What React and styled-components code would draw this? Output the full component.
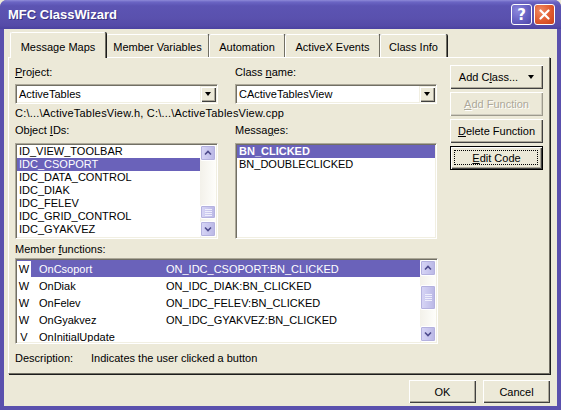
import React from 'react';
import styled, { createGlobalStyle } from 'styled-components';

const Global = createGlobalStyle`
  html, body { margin: 0; padding: 0; background: #ece9d8; }
  body { font-family: "Liberation Sans", Arial, sans-serif; font-size: 11px; color: #000; }
  * { box-sizing: border-box; }
`;

const Frame = styled.div`
  width: 561px;
  height: 410px;
  display: flex;
  flex-direction: column;
  background: #5a50ad;
  border-radius: 7px 7px 0 0;
  overflow: hidden;
`;

const TitleBar = styled.div`
  height: 29px;
  flex: none;
  display: flex;
  align-items: center;
  padding: 0 6px 0 8px;
  background: linear-gradient(180deg, #8e8ad8 0%, #6b65c4 7%, #5c54b3 20%, #5a51ae 60%, #554ba8 88%, #4b42a0 100%);
  color: #fff;
  font-weight: bold;
  font-size: 13px;
`;

const Title = styled.div`
  flex: 1;
  text-shadow: 1px 1px 0 #3a3280;
`;

const CapButtons = styled.div`
  display: flex;
  gap: 2px;
`;

const CapButton = styled.div`
  width: 21px;
  height: 21px;
  border: 1px solid #fff;
  border-radius: 3px;
  background: ${p => p.$close
    ? 'radial-gradient(circle at 30% 30%, #f08a64 0%, #e05a2e 55%, #c8401c 100%)'
    : 'radial-gradient(circle at 30% 30%, #8c88dc 0%, #6660c2 55%, #4d46a8 100%)'};
  display: flex;
  align-items: center;
  justify-content: center;
  color: #fff;
  font-size: 15px;
  font-weight: bold;
  font-family: "DejaVu Sans", sans-serif;
`;

const Client = styled.div`
  flex: 1;
  margin: 0 4px 4px;
  background: #ece9d8;
  display: flex;
  flex-direction: column;
  padding: 3px 7px 0 4px;
`;

const TabRow = styled.div`
  display: flex;
  align-items: flex-end;
  height: 26px;
  margin-left: 2px;
  margin-bottom: -1px;
  position: relative;
  z-index: 1;
`;

const Tab = styled.div`
  position: relative;
  width: ${p => p.$w}px;
  height: ${p => (p.$active ? 26 : 23)}px;
  margin-bottom: ${p => (p.$active ? 0 : 1)}px;
  padding-top: ${p => (p.$active ? 8 : 6)}px;
  line-height: 13px;
  text-align: center;
  white-space: nowrap;
  background: #ece9d8;
  border-top: 1px solid #fff;
  border-left: 1px solid #fff;
  border-right: 1px solid #716f64;
  box-shadow: 1px 0 0 #1c1c1c;
  border-radius: 2px 2px 0 0;
  z-index: ${p => (p.$active ? 2 : 1)};
`;

const Panel = styled.div`
  height: 317px;
  border-top: 1px solid #fff;
  border-left: 1px solid #fff;
  border-right: 1px solid #716f64;
  border-bottom: 1px solid #716f64;
  box-shadow: 1px 1px 0 #1c1c1c;
  padding: 8px 0 0 6px;
  display: flex;
  flex-direction: column;
`;

const TopSection = styled.div`
  display: flex;
  align-items: flex-start;
`;

const LeftGrid = styled.div`
  display: grid;
  grid-template-columns: 203px 202px;
  column-gap: 17px;
`;

const Label = styled.div`
  height: 13px;
  line-height: 13px;
  margin-top: ${p => p.$mt || 0}px;
  white-space: nowrap;
`;

const PathText = styled.div`
  grid-column: 1 / -1;
  height: 14px;
  line-height: 14px;
  margin-top: 2px;
  white-space: nowrap;
  letter-spacing: 0.2px;
`;

const Combo = styled.div`
  height: 20px;
  margin-top: 5px;
  display: flex;
  background: #fff;
  border-top: 1px solid #aca899;
  border-left: 1px solid #aca899;
  border-right: 1px solid #fff;
  border-bottom: 1px solid #fff;
  box-shadow: inset 1px 1px 0 #716f64, inset -1px -1px 0 #f1efe2;
  padding: 1px;
`;

const ComboText = styled.div`
  flex: 1;
  padding-left: 2px;
  line-height: 16px;
`;

const DropButton = styled.div`
  width: 16px;
  background: #ece9d8;
  box-shadow: inset 1px 1px 0 #f1efe2, inset 2px 2px 0 #fff, inset -1px -1px 0 #404040, inset -2px -2px 0 #aca899;
  display: flex;
  align-items: center;
  justify-content: center;
`;

const Triangle = styled.span`
  width: 0;
  height: 0;
  border-left: 3.5px solid transparent;
  border-right: 3.5px solid transparent;
  border-top: 4px solid #000;
  margin-left: ${p => p.$ml || 0}px;
`;

const ListBox = styled.div`
  width: ${p => p.$w}px;
  height: ${p => p.$h}px;
  margin-top: ${p => p.$mt || 0}px;
  display: flex;
  background: #fff;
  border-top: 1px solid #aca899;
  border-left: 1px solid #aca899;
  border-right: 1px solid #fff;
  border-bottom: 1px solid #fff;
  box-shadow: inset 1px 1px 0 #716f64, inset -1px -1px 0 #f1efe2;
  padding: 1px;
  overflow: hidden;
`;

const Items = styled.div`
  flex: 1;
  overflow: hidden;
`;

const Item = styled.div`
  height: 13px;
  line-height: 13px;
  padding-left: 2px;
  white-space: nowrap;
  font-weight: ${p => (p.$bold ? 'bold' : 'normal')};
  background: ${p => (p.$sel ? '#6a62ba' : 'transparent')};
  color: ${p => (p.$sel ? '#fff' : '#000')};
`;

const ScrollBar = styled.div`
  width: 16px;
  display: flex;
  flex-direction: column;
  background: linear-gradient(90deg, #f3f1ea, #fefefb);
`;

const ScrollBtn = styled.div`
  height: ${p => p.$h || 16}px;
  flex: none;
  margin-top: ${p => p.$mt || 0}px;
  border: 1px solid #fff;
  border-radius: 2px;
  background: linear-gradient(90deg, #d8d6f6, #c6c4ed 60%, #b9b6e4);
  box-shadow: inset 0 0 0 1px #b4b1df;
  display: flex;
  align-items: center;
  justify-content: center;
`;

const Spacer = styled.div`
  flex: 1;
`;

const Chevron = ({ down }) => (
  <svg width="8" height="6" viewBox="0 0 8 6">
    <path d={down ? 'M1 1.5 L4 4.5 L7 1.5' : 'M1 4.5 L4 1.5 L7 4.5'} stroke="#4d4a8c" strokeWidth="1.6" fill="none" />
  </svg>
);

const Grip = () => (
  <svg width="7" height="7" viewBox="0 0 7 7">
    <path d="M0 0.5 H7 M0 2.5 H7 M0 4.5 H7 M0 6.5 H7" stroke="#eeeefc" strokeWidth="1" />
  </svg>
);

const ButtonCol = styled.div`
  display: flex;
  flex-direction: column;
  gap: 3px;
  margin-left: 13px;
  margin-top: -1px;
  width: 93px;
`;

const Button = styled.div`
  position: relative;
  width: ${p => p.$w || 93}px;
  height: ${p => p.$h || 24}px;
  display: flex;
  align-items: center;
  justify-content: center;
  background: #ece9d8;
  white-space: nowrap;
  border: ${p => (p.$default ? '1px solid #000' : 'none')};
  box-shadow: ${p => (p.$disabled
    ? 'inset 1px 1px 0 #fff, inset -1px -1px 0 #9d9a8d, inset -2px -2px 0 #cfccbf'
    : 'inset 1px 1px 0 #fff, inset -1px -1px 0 #404040, inset -2px -2px 0 #aca899')};
  color: ${p => (p.$disabled ? '#aca899' : '#000')};
  text-shadow: ${p => (p.$disabled ? '1px 1px 0 #fff' : 'none')};
`;

const BtnText = styled.span`
  display: inline-block;
`;

const Focus = styled.span`
  position: absolute;
  inset: 3px 4px 4px 3px;
  border: 1px dotted #000;
  pointer-events: none;
`;

const MemberRow = styled.div`
  height: 17px;
  display: flex;
  align-items: center;
  white-space: nowrap;
  background: ${p => (p.$sel ? '#6a62ba' : 'transparent')};
  color: ${p => (p.$sel ? '#fff' : '#000')};
`;

const TypeCell = styled.div`
  width: 14px;
  height: 16px;
  line-height: 16px;
  text-align: center;
  background: #fff;
  color: #000;
  margin-right: 8px;
`;

const NameCell = styled.div`
  width: 127px;
`;

const DescRow = styled.div`
  display: flex;
  height: 14px;
  line-height: 14px;
  margin-top: 7px;
`;

const DescLabel = styled.div`
  width: 76px;
`;

const BottomBar = styled.div`
  display: flex;
  justify-content: flex-end;
  gap: 7px;
  margin-top: 6px;
`;

const tabs = [
  ['Message Maps', 96, true],
  ['Member Variables', 103],
  ['Automation', 76],
  ['ActiveX Events', 95],
  ['Class Info', 67],
];

const objectIds = ['ID_VIEW_TOOLBAR', 'IDC_CSOPORT', 'IDC_DATA_CONTROL', 'IDC_DIAK', 'IDC_FELEV', 'IDC_GRID_CONTROL', 'IDC_GYAKVEZ'];

const members = [
  ['W', 'OnCsoport', 'ON_IDC_CSOPORT:BN_CLICKED', true],
  ['W', 'OnDiak', 'ON_IDC_DIAK:BN_CLICKED'],
  ['W', 'OnFelev', 'ON_IDC_FELEV:BN_CLICKED'],
  ['W', 'OnGyakvez', 'ON_IDC_GYAKVEZ:BN_CLICKED'],
  ['V', 'OnInitialUpdate', ''],
];

export default function App() {
  return (
    <>
      <Global />
      <Frame>
        <TitleBar>
          <Title>MFC ClassWizard</Title>
          <CapButtons>
            <CapButton>?</CapButton>
            <CapButton $close>
              <svg width="11" height="11" viewBox="0 0 11 11">
                <path d="M1.5 1.5 L9.5 9.5 M9.5 1.5 L1.5 9.5" stroke="#fff" strokeWidth="2.2" strokeLinecap="round" />
              </svg>
            </CapButton>
          </CapButtons>
        </TitleBar>
        <Client>
          <TabRow>
            {tabs.map(([t, w, a]) => (
              <Tab key={t} $w={w} $active={a}>{t}</Tab>
            ))}
          </TabRow>
          <Panel>
            <TopSection>
              <LeftGrid>
                <Label><u>P</u>roject:</Label>
                <Label>Class <u>n</u>ame:</Label>
                <Combo>
                  <ComboText>ActiveTables</ComboText>
                  <DropButton><Triangle /></DropButton>
                </Combo>
                <Combo>
                  <ComboText>CActiveTablesView</ComboText>
                  <DropButton><Triangle /></DropButton>
                </Combo>
                <PathText>C:\...\ActiveTablesView.h, C:\...\ActiveTablesView.cpp</PathText>
                <Label $mt={4}>Object <u>I</u>Ds:</Label>
                <Label $mt={4}>Messa<u>g</u>es:</Label>
                <ListBox $w={203} $h={96} $mt={6}>
                  <Items>
                    {objectIds.map((id, i) => (
                      <Item key={id} $sel={i === 1}>{id}</Item>
                    ))}
                  </Items>
                  <ScrollBar>
                    <ScrollBtn><Chevron /></ScrollBtn>
                    <Spacer />
                    <ScrollBtn $h={14}><Grip /></ScrollBtn>
                    <ScrollBtn $mt={2}><Chevron down /></ScrollBtn>
                  </ScrollBar>
                </ListBox>
                <ListBox $w={202} $h={96} $mt={6}>
                  <Items>
                    <Item $sel $bold>BN_CLICKED</Item>
                    <Item>BN_DOUBLECLICKED</Item>
                  </Items>
                </ListBox>
              </LeftGrid>
              <ButtonCol>
                <Button><BtnText>Add C<u>l</u>ass...</BtnText><Triangle $ml={10} /></Button>
                <Button $disabled><BtnText><u>A</u>dd Function</BtnText></Button>
                <Button><BtnText><u>D</u>elete Function</BtnText></Button>
                <Button $default><BtnText><u>E</u>dit Code</BtnText><Focus /></Button>
              </ButtonCol>
            </TopSection>
            <Label $mt={4}>Member <u>f</u>unctions:</Label>
            <ListBox $w={423} $h={86} $mt={2}>
              <Items>
                {members.map(([t, n, m, s]) => (
                  <MemberRow key={n} $sel={s}>
                    <TypeCell>{t}</TypeCell>
                    <NameCell>{n}</NameCell>
                    <div>{m}</div>
                  </MemberRow>
                ))}
              </Items>
              <ScrollBar>
                <ScrollBtn><Chevron /></ScrollBtn>
                <ScrollBtn $h={25} $mt={9}><Grip /></ScrollBtn>
                <Spacer />
                <ScrollBtn><Chevron down /></ScrollBtn>
              </ScrollBar>
            </ListBox>
            <DescRow>
              <DescLabel>Description:</DescLabel>
              <div>Indicates the user clicked a button</div>
            </DescRow>
          </Panel>
          <BottomBar>
            <Button $w={67} $h={23}><BtnText>OK</BtnText></Button>
            <Button $w={67} $h={23}><BtnText>Cancel</BtnText></Button>
          </BottomBar>
        </Client>
      </Frame>
    </>
  );
}
